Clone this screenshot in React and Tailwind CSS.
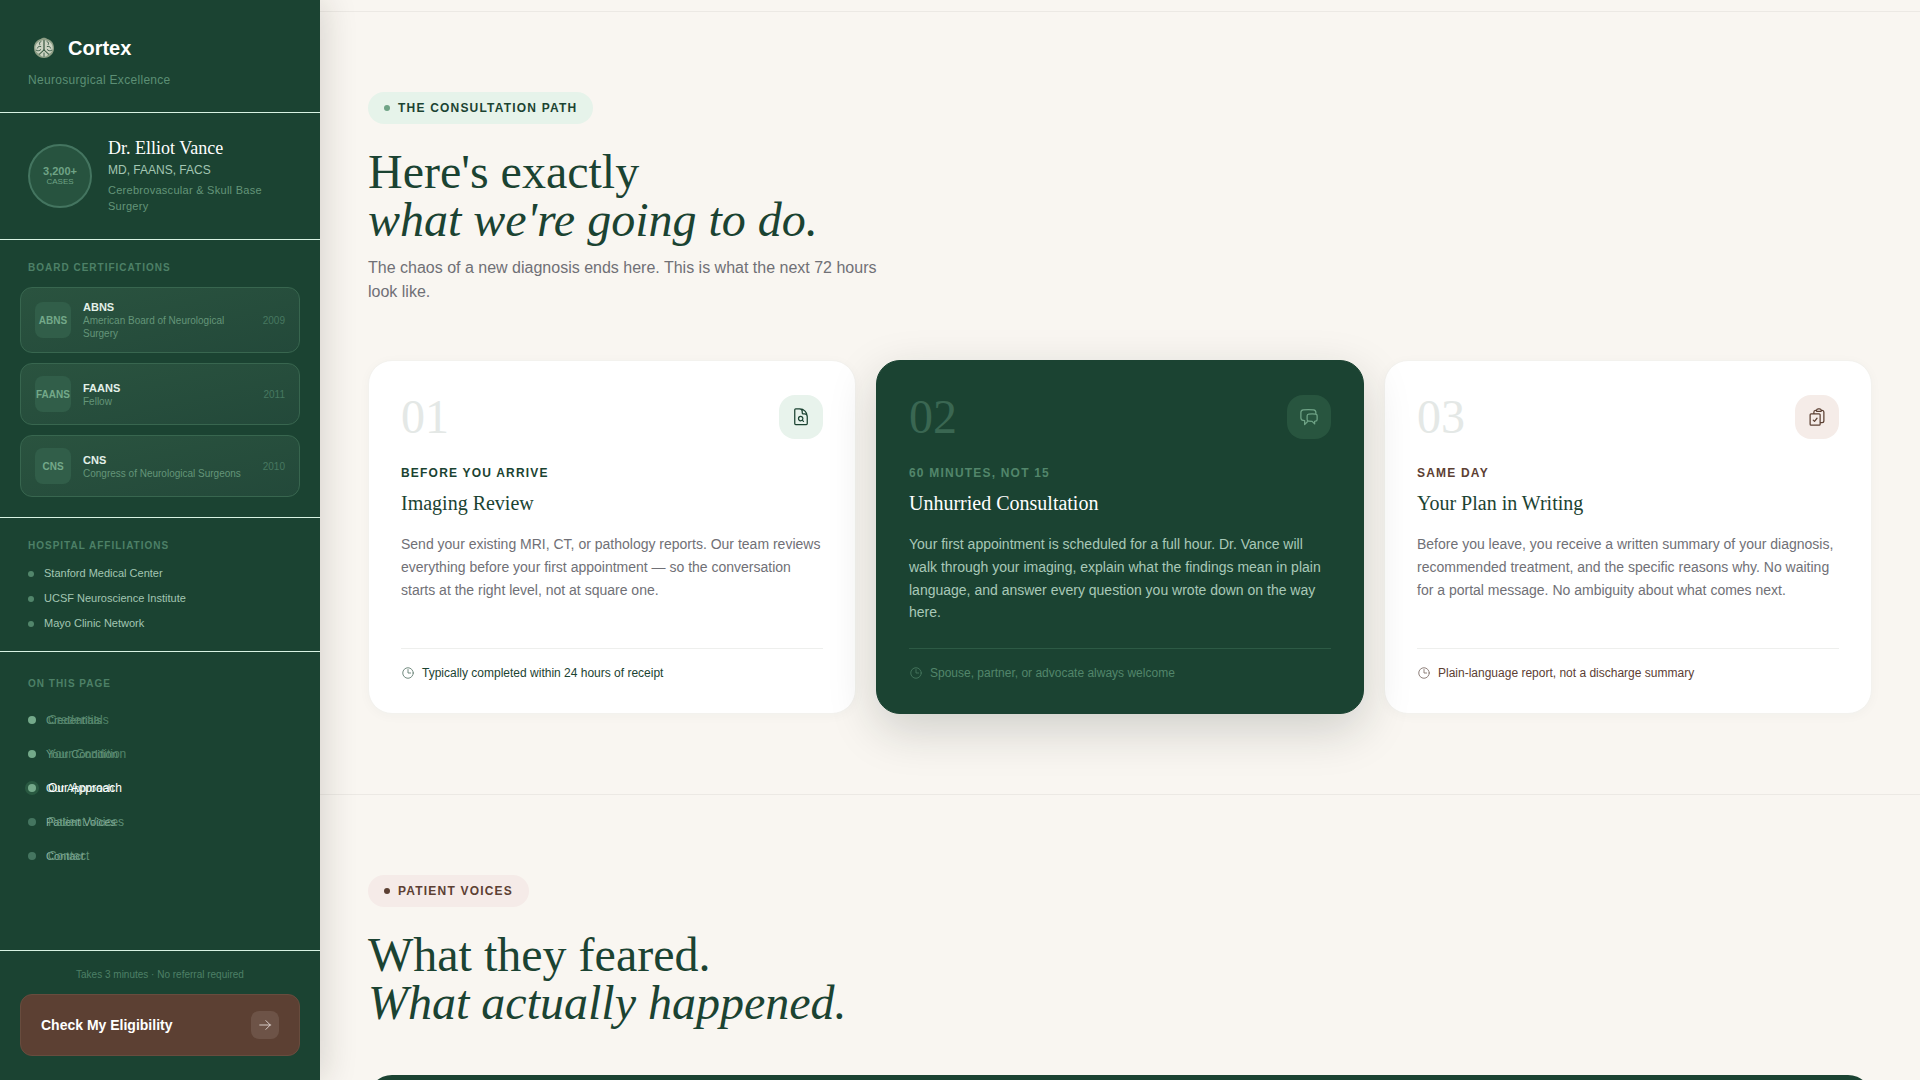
import {
  HiOutlineDocumentMagnifyingGlass,
  HiOutlineChatBubbleLeftRight,
  HiOutlineClipboardDocumentCheck,
  HiOutlineClock,
  HiOutlineArrowRight,
} from "react-icons/hi2";

const certifications = [
  { code: "ABNS", name: "American Board of Neurological Surgery", year: "2009" },
  { code: "FAANS", name: "Fellow", year: "2011" },
  { code: "CNS", name: "Congress of Neurological Surgeons", year: "2010" },
];

const hospitals = ["Stanford Medical Center", "UCSF Neuroscience Institute", "Mayo Clinic Network"];

const visited = { dot: "bg-[#74a98a]", front: "text-[#528369]", back: "text-[#6a9a80]" };
const upcoming = { dot: "bg-[#457560]", front: "text-[#5f8f77]", back: "text-[#8fb5a2]" };
const current = {
  dot: "bg-[#74a98a] ring-3 ring-[#295941]",
  front: "text-white",
  back: "text-[#dcebe2]",
};

const navItems = [
  { label: "Credentials", tone: visited },
  { label: "Your Condition", tone: visited },
  { label: "Our Approach", tone: current },
  { label: "Patient Voices", tone: upcoming },
  { label: "Contact", tone: upcoming },
];

const steps = [
  {
    number: "01",
    Icon: HiOutlineDocumentMagnifyingGlass,
    label: "BEFORE YOU ARRIVE",
    title: "Imaging Review",
    body: "Send your existing MRI, CT, or pathology reports. Our team reviews everything before your first appointment — so the conversation starts at the right level, not at square one.",
    note: "Typically completed within 24 hours of receipt",
    card: "border-[#f3f2ee] bg-white shadow-[0_2px_12px_rgba(27,67,50,0.03)]",
    numberTone: "text-[#e4e8e6]",
    iconTone: "bg-[#e8f3ec] text-[#1b4332]",
    labelTone: "text-[#1b4332]",
    titleTone: "text-[#1b4332]",
    bodyTone: "text-[#707076]",
    rule: "border-[#eeefed]",
    clockTone: "text-[#5f7a6e]",
    noteTone: "text-[#1b4332]",
  },
  {
    number: "02",
    Icon: HiOutlineChatBubbleLeftRight,
    label: "60 MINUTES, NOT 15",
    title: "Unhurried Consultation",
    body: "Your first appointment is scheduled for a full hour. Dr. Vance will walk through your imaging, explain what the findings mean in plain language, and answer every question you wrote down on the way here.",
    note: "Spouse, partner, or advocate always welcome",
    card: "relative border-[#1b4332] bg-[#1b4332] shadow-[0_16px_48px_rgba(20,35,28,0.18)]",
    numberTone: "text-[#3a6752]",
    iconTone: "bg-[#28553f] text-[#6fa386]",
    labelTone: "text-[#52866b]",
    titleTone: "text-white",
    bodyTone: "text-[#a9c9b8]",
    rule: "border-[#2d5a45]",
    clockTone: "text-[#47785f]",
    noteTone: "text-[#52866b]",
  },
  {
    number: "03",
    Icon: HiOutlineClipboardDocumentCheck,
    label: "SAME DAY",
    title: "Your Plan in Writing",
    body: "Before you leave, you receive a written summary of your diagnosis, recommended treatment, and the specific reasons why. No waiting for a portal message. No ambiguity about what comes next.",
    note: "Plain-language report, not a discharge summary",
    card: "border-[#f3f2ee] bg-white shadow-[0_2px_12px_rgba(27,67,50,0.03)]",
    numberTone: "text-[#e4e8e6]",
    iconTone: "bg-[#f5ece8] text-[#5c4033]",
    labelTone: "text-[#5c4033]",
    titleTone: "text-[#1b4332]",
    bodyTone: "text-[#707076]",
    rule: "border-[#eeefed]",
    clockTone: "text-[#80706a]",
    noteTone: "text-[#5c4033]",
  },
];

function Logo() {
  return (
    <svg viewBox="0 0 32 32" className="size-8" aria-hidden="true">
      <path d="M16 5.800c1.600 0 2.600.6 3.400 1.300C23.600 8.200 26 11.800 26 16.200c0 5.200-4.300 9.800-10 9.800S6 21.400 6 16.200c0-4.400 2.400-8 6.600-9.100.8-.7 1.800-1.300 3.400-1.300Z" fill="#8e9f86" />
      <g fill="#ccd3c2">
        <path d="M15.400 8.300v9.200l-4.200 4.200c-2.300-.3-3.900-2.600-3.900-5.600 0-4.200 3.300-7.400 8.100-7.800Z" />
        <path d="M16.600 8.300v9.200l4.200 4.200c2.300-.3 3.900-2.600 3.900-5.600 0-4.200-3.300-7.400-8.100-7.800Z" />
        <path d="m16 18.700 4 4.100c-1 1.200-2.300 1.900-4 1.900s-3-.7-4-1.900Z" />
      </g>
      <g fill="none" stroke="#31543f" strokeWidth=".9" strokeLinecap="round">
        <path d="M16 8.500V18M16 18l-4.800 4.300M16 18l4.800 4.300M16 21v3.500" />
        <path d="M13 9.500c-1.600.6-2 1.800-1.300 3M12.800 14.500c-1.400-.6-3 0-3.400 1.600M8.200 18.200c1.500 1 3.500.8 4.600-.6" />
        <path d="M19 9.500c1.600.6 2 1.800 1.300 3M19.200 14.500c1.400-.6 3 0 3.400 1.600M23.800 18.200c-1.500 1-3.500.8-4.600-.6" />
      </g>
    </svg>
  );
}

function SideLabel({ children }) {
  return <h2 className="px-7 text-[10px] leading-[15px] font-bold tracking-widest text-[#4d8067]">{children}</h2>;
}

function Sidebar() {
  return (
    <aside className="relative z-10 flex w-80 shrink-0 flex-col bg-[#1b4332] shadow-[4px_0_32px_rgba(40,30,20,0.16)]">
      <header className="border-b border-[#d8f3e3] px-7 pt-8 pb-6">
        <div className="flex items-center gap-2">
          <Logo />
          <span className="text-xl leading-8 font-bold text-white">Cortex</span>
        </div>
        <p className="mt-2 text-xs tracking-wide text-[#5c8f75]">Neurosurgical Excellence</p>
      </header>

      <section className="flex items-center gap-4 border-b border-[#d8f3e3] px-7 py-6">
        <div className="flex size-16 shrink-0 flex-col items-center justify-center rounded-full border-2 border-[#447560] bg-[#27533f]">
          <span className="text-[11px] leading-3 font-bold text-[#6fa386]">3,200+</span>
          <span className="text-[8px] leading-[10px] text-[#6fa386]">CASES</span>
        </div>
        <div className="min-w-0 pb-px">
          <h2 className="font-['Liberation_Serif',serif] text-lg leading-[23px] text-white">Dr. Elliot Vance</h2>
          <p className="mt-[2px] text-xs text-[#a3c6b3]">MD, FAANS, FACS</p>
          <p className="mt-1 text-[11px] leading-4 tracking-wide text-[#649579]">Cerebrovascular &amp; Skull Base Surgery</p>
        </div>
      </section>

      <section className="border-b border-[#d8f3e3] py-5">
        <SideLabel>BOARD CERTIFICATIONS</SideLabel>
        <ul className="mt-3 flex flex-col gap-[10px] px-5">
          {certifications.map((c) => (
            <li key={c.code} className="flex items-center gap-3 rounded-xl border border-[#38664f] bg-linear-to-br from-[#2a533f] to-[#23493a] px-[14px] py-3">
              <span className="flex size-9 shrink-0 items-center justify-center rounded-lg bg-[#315e49] text-[10px] font-bold text-[#74a98a]">{c.code}</span>
              <span className="min-w-0 flex-1">
                <span className="block text-[11px] leading-[14px] font-bold text-[#e3f0e9]">{c.code}</span>
                <span className="block text-[10px] leading-[13px] text-[#649579]">{c.name}</span>
              </span>
              <span className="text-[10px] text-[#477860]">{c.year}</span>
            </li>
          ))}
        </ul>
      </section>

      <section className="border-b border-[#d8f3e3] pt-5 pb-[19px]">
        <SideLabel>HOSPITAL AFFILIATIONS</SideLabel>
        <ul className="mt-3 flex flex-col gap-2 px-7">
          {hospitals.map((h) => (
            <li key={h} className="flex items-center gap-[10px] text-[11px] leading-[17px] text-[#a3c6b3]">
              <span className="size-[6px] rounded-full bg-[#52866b]" />
              {h}
            </li>
          ))}
        </ul>
      </section>

      <nav className="flex-1 pt-6" aria-label="On this page">
        <SideLabel>ON THIS PAGE</SideLabel>
        <ul className="mt-3 px-7">
          {navItems.map(({ label, tone }) => (
            <li key={label}>
              <a href="#" className="flex h-[34px] items-center gap-[10px]">
                <span className={`size-2 rounded-full ${tone.dot}`} />
                <span className="grid items-center">
                  <span className={`col-start-1 row-start-1 text-[11px] leading-4 ${tone.back}`}>{label}</span>
                  <span aria-hidden="true" className={`col-start-1 row-start-1 pl-[2px] text-xs leading-4 ${tone.front}`}>{label}</span>
                </span>
              </a>
            </li>
          ))}
        </ul>
      </nav>

      <footer className="border-t border-[#d8f3e3] px-5 pt-4 pb-6">
        <p className="text-center text-[10px] leading-[15px] text-[#4d8067]">Takes 3 minutes · No referral required</p>
        <button type="button" className="mt-3 flex w-full items-center justify-between rounded-xl border border-[#684c3e] bg-[#5c4033] px-5 py-4">
          <span className="text-sm font-bold text-white">Check My Eligibility</span>
          <span className="flex size-7 items-center justify-center rounded-lg bg-[#6d5347] text-[#e6dcd8]">
            <HiOutlineArrowRight size={14} />
          </span>
        </button>
      </footer>
    </aside>
  );
}

function Pill({ tone, dot, children }) {
  return (
    <p className={`flex h-8 w-fit items-center gap-2 rounded-full px-4 text-xs font-bold tracking-widest ${tone}`}>
      <span className={`size-[6px] rounded-full ${dot}`} />
      {children}
    </p>
  );
}

function SectionHeading({ first, second }) {
  return (
    <h1 className="mt-6 font-['Liberation_Serif',serif] text-5xl leading-[48px] text-[#1b4332]">
      {first}
      <em className="block">{second}</em>
    </h1>
  );
}

function StepCard({ step }) {
  const { Icon } = step;
  return (
    <article className={`flex flex-col rounded-3xl border p-8 ${step.card}`}>
      <div className="flex items-center justify-between">
        <span className={`font-['Liberation_Serif',serif] text-5xl leading-[48px] ${step.numberTone}`}>{step.number}</span>
        <span className={`flex size-11 items-center justify-center rounded-2xl ${step.iconTone}`}>
          <Icon size={20} />
        </span>
      </div>
      <p className={`mt-6 text-xs font-bold tracking-widest ${step.labelTone}`}>{step.label}</p>
      <h2 className={`mt-2 font-['Liberation_Serif',serif] text-xl leading-7 ${step.titleTone}`}>{step.title}</h2>
      <p className={`mt-4 mb-6 text-sm leading-relaxed ${step.bodyTone}`}>{step.body}</p>
      <div className={`mt-auto flex items-center gap-[7px] border-t pt-4 text-xs ${step.rule}`}>
        <HiOutlineClock size={14} className={step.clockTone} />
        <span className={step.noteTone}>{step.note}</span>
      </div>
    </article>
  );
}

export default function App() {
  return (
    <div className="flex h-screen overflow-hidden bg-[#f9f6f1] font-['Liberation_Sans',Arial,sans-serif]">
      <Sidebar />
      <main className="min-w-0 flex-1 overflow-hidden">
        <div className="h-3 border-b border-[#ece9e4]" />
        <section className="border-b border-[#ece9e4] px-12 py-20">
          <Pill tone="bg-[#e6f3ea] text-[#1b4332]" dot="bg-[#6fa386]">THE CONSULTATION PATH</Pill>
          <SectionHeading first="Here's exactly" second="what we're going to do." />
          <p className="mt-3 max-w-lg text-base text-[#707076]">
            The chaos of a new diagnosis ends here. This is what the next 72 hours look like.
          </p>
          <div className="mt-14 grid grid-cols-3 gap-5">
            {steps.map((step) => (
              <StepCard key={step.number} step={step} />
            ))}
          </div>
        </section>
        <section className="px-12 pt-20">
          <Pill tone="bg-[#f5ebe8] text-[#5c4033]" dot="bg-[#5c4033]">PATIENT VOICES</Pill>
          <SectionHeading first="What they feared." second="What actually happened." />
          <div className="mt-12 min-h-80 rounded-3xl bg-[#1b4332]" />
        </section>
      </main>
    </div>
  );
}
